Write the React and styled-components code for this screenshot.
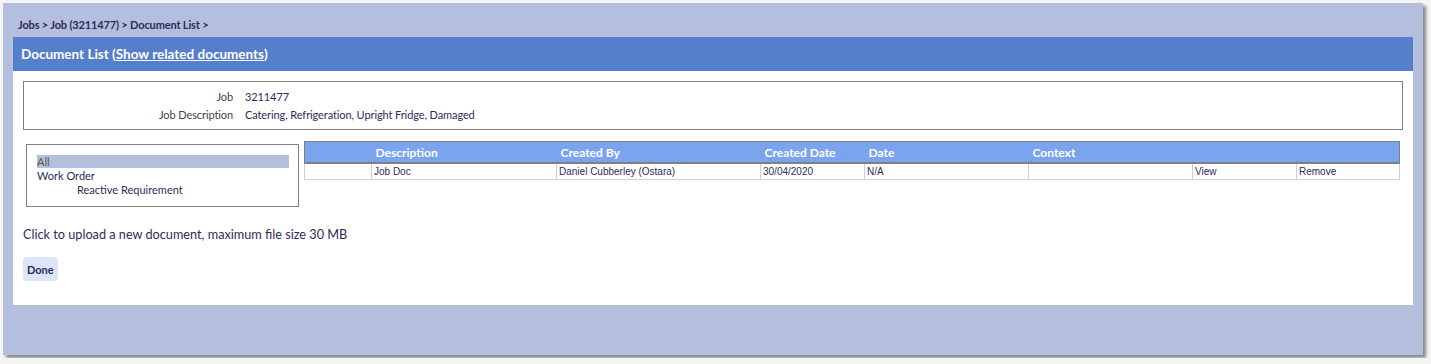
import styled, { createGlobalStyle } from "styled-components";

const GlobalStyle = createGlobalStyle`
  html, body {
    margin: 0;
    padding: 0;
    background: #f4f4f4;
  }
  body {
    font-family: Lato, "Open Sans", sans-serif;
    color: #2f2a5c;
  }
`;

const Frame = styled.div`
  margin: 3px;
  width: 1420px;
  height: 352px;
  box-sizing: border-box;
  padding: 0 10px;
  background: #b4bfdd;
  box-shadow: 3px 3px 3px rgba(0, 0, 0, 0.45);
`;

const Breadcrumb = styled.div`
  height: 34px;
  box-sizing: border-box;
  padding: 15px 0 0 5px;
  font-size: 11px;
  font-weight: 700;
  line-height: 14px;
  letter-spacing: -0.15px;
  color: #2f2a5c;
`;

const TitleBar = styled.div`
  height: 34px;
  display: flex;
  align-items: center;
  padding-left: 8px;
  background: #557ecb;
  color: #fff;
  font-size: 13.5px;
  font-weight: 700;
`;

const TitleLink = styled.a`
  color: #fff;
  text-decoration: underline;
`;

const Panel = styled.div`
  background: #fff;
  height: 234px;
  box-sizing: border-box;
  padding: 10px;
  display: flex;
  flex-direction: column;
`;

const InfoBox = styled.div`
  border: 1px solid #808080;
  height: 49px;
  box-sizing: border-box;
  padding-top: 5px;
  display: grid;
  grid-template-columns: 209px 1fr;
  column-gap: 12px;
  grid-auto-rows: 18px;
  font-size: 11px;
  letter-spacing: -0.1px;
  align-items: center;
`;

const InfoLabel = styled.div`
  text-align: right;
  color: #444;
`;

const InfoValue = styled.div`
  color: #2f2a5c;
`;

const Middle = styled.div`
  display: flex;
  align-items: flex-start;
  margin-top: 11px;
  gap: 5px;
`;

const TreeBox = styled.div`
  margin: 3px 0 0 3px;
  width: 273px;
  height: 63px;
  box-sizing: border-box;
  border: 1px solid #808080;
  padding: 10px 9px 0 10px;
  font-size: 11px;
  line-height: 14px;
`;

const TreeItem = styled.div`
  padding-left: ${({ $depth }) => $depth * 40}px;
  height: ${({ $selected }) => ($selected ? "13px" : "14px")};
  line-height: ${({ $selected }) => ($selected ? "13px" : "14px")};
  margin-bottom: ${({ $selected }) => ($selected ? "1px" : "0")};
  background: ${({ $selected }) => ($selected ? "#b4bfdd" : "transparent")};
  color: ${({ $selected }) => ($selected ? "#555" : "#2f2a5c")};
`;

const DocTable = styled.table`
  width: 1095px;
  border-collapse: collapse;
  font-family: "Liberation Sans", Arial, sans-serif;
  font-size: 10px;
  table-layout: fixed;
`;

const HeadCell = styled.th`
  background: #7ba4ef;
  color: #fff;
  font-family: Lato, "Open Sans", sans-serif;
  font-weight: 700;
  font-size: 12px;
  text-align: left;
  height: 20px;
  padding: 0 0 0 4px;
  border-top: 1px solid #808080;
  border-bottom: 2px solid #808080;
  &:first-child {
    border-left: 1px solid #808080;
  }
  &:last-child {
    border-right: 1px solid #808080;
  }
`;

const Cell = styled.td`
  border: 1px solid #d0d0d0;
  height: 15px;
  padding: 0 0 0 2px;
  color: #2f2a5c;
  white-space: nowrap;
  overflow: hidden;
`;

const UploadText = styled.div`
  margin-top: 18px;
  font-size: 12.7px;
  line-height: 18px;
  color: #2f2a5c;
`;

const DoneButton = styled.button`
  margin-top: 14px;
  align-self: flex-start;
  height: 24px;
  padding: 0 4px;
  border: none;
  border-radius: 4px;
  background: #dbe5f8;
  color: #2f2a5c;
  font-family: Lato, "Open Sans", sans-serif;
  font-size: 11px;
  font-weight: 700;
`;

const columns = [
  { key: "blank", label: "", width: 67 },
  { key: "desc", label: "Description", width: 185 },
  { key: "by", label: "Created By", width: 204 },
  { key: "created", label: "Created Date", width: 104 },
  { key: "date", label: "Date", width: 164 },
  { key: "context", label: "Context", width: 164 },
  { key: "view", label: "", width: 104 },
  { key: "remove", label: "", width: 103 },
];

const rows = [
  {
    blank: "",
    desc: "Job Doc",
    by: "Daniel Cubberley (Ostara)",
    created: "30/04/2020",
    date: "N/A",
    context: "",
    view: "View",
    remove: "Remove",
  },
];

const tree = [
  { label: "All", depth: 0, selected: true },
  { label: "Work Order", depth: 0 },
  { label: "Reactive Requirement", depth: 1 },
];

export default function App() {
  return (
    <>
      <GlobalStyle />
      <Frame>
        <Breadcrumb>Jobs &gt; Job (3211477) &gt; Document List &gt;</Breadcrumb>
        <TitleBar>
          Document List (<TitleLink href="#">Show related documents</TitleLink>)
        </TitleBar>
        <Panel>
          <InfoBox>
            <InfoLabel>Job</InfoLabel>
            <InfoValue>3211477</InfoValue>
            <InfoLabel>Job Description</InfoLabel>
            <InfoValue>Catering, Refrigeration, Upright Fridge, Damaged</InfoValue>
          </InfoBox>
          <Middle>
            <TreeBox>
              {tree.map((t) => (
                <TreeItem key={t.label} $depth={t.depth} $selected={t.selected}>
                  {t.label}
                </TreeItem>
              ))}
            </TreeBox>
            <DocTable>
              <colgroup>
                {columns.map((c) => (
                  <col key={c.key} style={{ width: c.width }} />
                ))}
              </colgroup>
              <thead>
                <tr>
                  {columns.map((c) => (
                    <HeadCell key={c.key}>{c.label}</HeadCell>
                  ))}
                </tr>
              </thead>
              <tbody>
                {rows.map((r, i) => (
                  <tr key={i}>
                    {columns.map((c) => (
                      <Cell key={c.key}>{r[c.key]}</Cell>
                    ))}
                  </tr>
                ))}
              </tbody>
            </DocTable>
          </Middle>
          <UploadText>Click to upload a new document, maximum file size 30 MB</UploadText>
          <DoneButton>Done</DoneButton>
        </Panel>
      </Frame>
    </>
  );
}
